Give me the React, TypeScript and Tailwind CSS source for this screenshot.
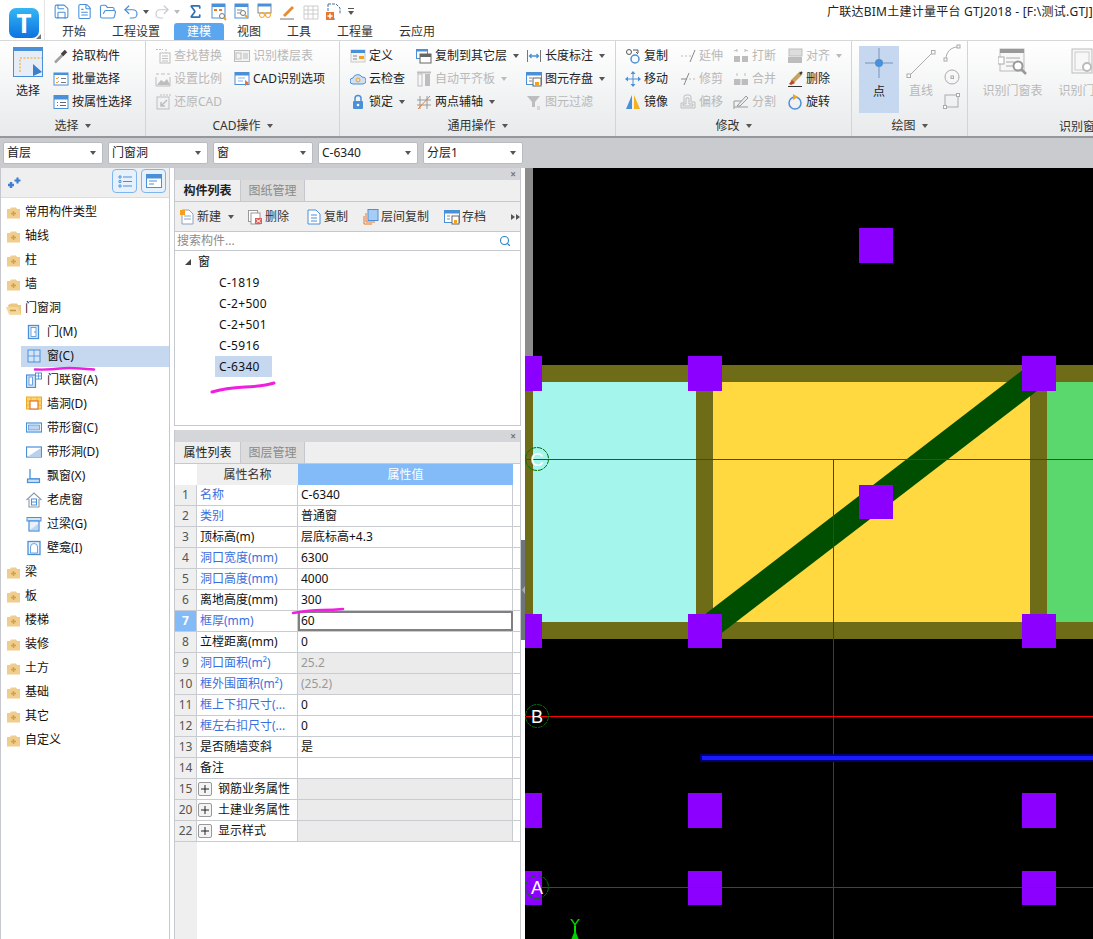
import React from "react";
import { Save, FileText, FolderOpen, Undo2, Redo2, Sigma, Search } from "lucide-react";

const B = "#4a90d9";
const G = "#bdbdbd";
const O = "#f5a11e";

function Ico({ children, w = 16, h = 16 }: { children?: React.ReactNode; w?: number; h?: number }) {
  return (
    <svg width={w} height={h} viewBox={`0 0 ${w} ${h}`} fill="none" className="shrink-0">
      {children}
    </svg>
  );
}

const Tri = ({ c = "#555" }: { c?: string }) => (
  <span className="ml-[6px] h-0 w-0 border-x-[3.5px] border-t-[4px] border-x-transparent" style={{ borderTopColor: c }} />
);

/* ---------- ribbon icons ---------- */
const pick = <Ico><path d="M2 14.5l8-8" stroke="#a0a0a0" strokeWidth="2.5" /><path d="M9 7l4-4" stroke="#444" strokeWidth="3.5" /></Ico>;
const batch = <Ico><rect x="1" y="2" width="14" height="12" stroke={B} fill="#fff" /><rect x="1" y="2" width="14" height="2" fill={B} /><path d="M3 7l1 1 2-2M3 11l1 1 2-2" stroke={O} /><path d="M8 7.5h5M8 11.5h5" stroke="#777" /></Ico>;
const attr = <Ico><rect x="1" y="1.5" width="14" height="13" stroke={B} fill="#fff" /><rect x="1" y="1.5" width="14" height="4" fill={B} /><path d="M4 8.5h1M7 8.5h6M4 11.5h1M7 11.5h6" stroke="#667" /></Ico>;
const findI = <Ico><path d="M1 1.5h7M11 1v4" stroke={G} strokeDasharray="2 1" /><rect x="5" y="5" width="10" height="10" stroke={G} /><path d="M7 8h6M7 10.500h6M7 13h6" stroke={G} /></Ico>;
const floorT = <Ico><rect x="0.500" y="2.500" width="15" height="11" stroke={G} fill="#f2f2f2" /><rect x="2" y="5" width="5" height="6" stroke={G} /><path d="M9 6h5M9 8h5M9 10h5" stroke={G} /></Ico>;
const scale = <Ico><path d="M1 3h3M6 3h4M12 3h3" stroke={G} /><path d="M1 6v9h14V6" stroke={G} /><path d="M2 14l4-5 3 2 3-3 3 6z" fill={G} /></Ico>;
const cadOpt = <Ico><rect x="1" y="1.500" width="14" height="12" stroke={B} fill="#fff" /><rect x="1" y="1.500" width="14" height="3" fill={B} /><path d="M4 7h7M4 10h5" stroke="#8ab4e8" /><path d="M11 9l4 3-4 3z" fill="#f07030" /></Ico>;
const restore = <Ico><rect x="2" y="3" width="12" height="12" stroke={G} /><path d="M5 1h11" stroke={G} strokeDasharray="2 1" /><path d="M12 6l-6 6M6 8v4h4" stroke={G} strokeWidth="1.500" /></Ico>;
const defI = <Ico><rect x="1" y="2" width="14" height="12" fill="#f4f4f4" stroke="#c9c9c9" /><rect x="1" y="2" width="14" height="3" fill={B} /><rect x="9" y="8" width="5" height="3" fill={O} /><path d="M3 8h4M3 11h4" stroke="#888" /></Ico>;
const cloud = <Ico><path d="M3 13a3 3 0 0 1 0-6 5 5 0 0 1 9-1 3.500 3.500 0 0 1 1 7z" fill="#cfe0f5" stroke={B} /><circle cx="8" cy="9" r="2" stroke={O} /></Ico>;
const lock = <Ico><path d="M5 7V4.500a3 3 0 0 1 6 0V7" stroke={B} strokeWidth="1.500" /><rect x="3" y="7" width="10" height="8" rx="1" fill={B} /><circle cx="8" cy="11" r="1.300" fill="#fff" /></Ico>;
const copyF = <Ico><rect x="0.500" y="1.500" width="11" height="9" fill="#fff" stroke={B} /><rect x="0.500" y="1.500" width="11" height="2" fill={B} /><rect x="4" y="6" width="11" height="9" fill="#fff" stroke="#666" /><rect x="4" y="6" width="11" height="3" fill="#666" /></Ico>;
const autoF = <Ico><path d="M1 1.500h14" stroke={G} strokeWidth="2" /><rect x="2" y="3" width="4" height="12" fill="none" stroke={G} /><rect x="9" y="3" width="5" height="12" fill={G} /></Ico>;
const twoP = <Ico><path d="M4 2v13M11 2v13M1 6h14M1 11h14" stroke="#999" /><path d="M2 15L14 2" stroke="#e87a30" /></Ico>;
const lenI = <Ico><path d="M1.500 2v12M14.500 2v12" stroke="#777" /><path d="M4 8h8M5.500 6L3.500 8l2 2M10.500 6l2 2-2 2" stroke={B} strokeWidth="1.300" /></Ico>;
const saveI = <Ico><rect x="0.500" y="1.500" width="15" height="12" fill="#fff" stroke={B} /><rect x="0.500" y="1.500" width="15" height="3" fill={B} /><rect x="7" y="7" width="8" height="8" fill="#fff" stroke="#666" /><rect x="9" y="11" width="4" height="4" fill={O} /><path d="M3 7h3M3 10h3" stroke="#888" /></Ico>;
const funnel = <Ico><path d="M1 2h13L9 8v5H6V8z" fill={G} /><path d="M11 13h3M11 15h3" stroke={G} /></Ico>;
const copy2 = <Ico><circle cx="4" cy="4" r="2.500" stroke="#555" /><circle cx="10" cy="11" r="4" stroke={B} strokeWidth="1.500" /><path d="M8 2h5v3M11 4l2 2" stroke="#555" /></Ico>;
const move = <Ico><path d="M8 2v12M2 8h12" stroke={B} /><path d="M8 0l2.500 3h-5zM8 16l2.500-3h-5zM0 8l3-2.500v5zM16 8l-3-2.500v5z" fill={B} /></Ico>;
const mirror = <Ico><path d="M7 1v14H1z" fill={B} /><path d="M9 1v14h6z" fill="#f5b21e" /></Ico>;
const ext = <Ico><path d="M1 8h2M5 8h2M9 8h2" stroke={G} /><path d="M10 14L15 2" stroke="#888" /></Ico>;
const trim = <Ico><path d="M1 8h6" stroke="#888" /><path d="M9 8h2M13 8h2" stroke={G} /><path d="M4 14L9 2" stroke="#888" /></Ico>;
const offs = <Ico><path d="M1 14V9h3V3a2 2 0 0 1 2-2h3a2 2 0 0 1 2 2v5h4v6z" stroke={G} /><path d="M3 12V10h3V4h3v6h4v2z" stroke={G} /></Ico>;
const brk = <Ico><path d="M4 1v3M12 1v3M1 3l3-1M15 3l-3-1" stroke={G} /><rect x="1" y="8" width="6" height="6" fill={G} /><rect x="9" y="8" width="6" height="6" fill={G} /></Ico>;
const mrg = <Ico><path d="M4 2v3M12 2v3" stroke={G} /><rect x="1" y="8" width="14" height="6" fill={G} /><path d="M8 8v6" stroke="#fff" /></Ico>;
const spl = <Ico><path d="M1 15V7h8M1 13h14" stroke="#999" /><path d="M4 12L13 2l2 2-8 8z" stroke="#999" fill="#eee" /></Ico>;
const align = <Ico w={16} h={16}><rect x="2" y="1" width="13" height="7" fill="#ddd" stroke={G} /><rect x="1" y="9" width="14" height="6" fill={G} /></Ico>;
const erase = <Ico><path d="M5 11L14 2" stroke="#c9a060" strokeWidth="4" /><path d="M15 1l-2 2" stroke="#333" strokeWidth="2" /><path d="M2 13l3-4 3 3-4 2z" fill="#c04a20" /><path d="M1 15.500h14" stroke="#333" /></Ico>;
const rot = <Ico><circle cx="8" cy="9" r="6" stroke={B} strokeWidth="1.500" /><path d="M6 0l5 3-5 3z" fill={O} /></Ico>;

const bigSel = (
  <Ico w={30} h={30}>
    <rect x="0.500" y="0.500" width="29" height="29" fill="#e6edf7" stroke={B} />
    <rect x="0" y="0" width="30" height="4" fill={B} />
    <path d="M7 25V11h22" stroke={O} strokeDasharray="2 1.500" />
    <path d="M20 17l9 8-9 4z" fill="#3d7fc9" />
  </Ico>
);
const pointI = (
  <Ico w={30} h={32}>
    <path d="M15 1v30M1 16h28" stroke="#7a93b3" />
    <circle cx="15" cy="16" r="4" fill={B} />
  </Ico>
);
const lineI = (
  <Ico w={30} h={30}>
    <path d="M3 27L27 3" stroke="#aaa" />
    <rect x="1" y="25" width="3.500" height="3.500" fill="#fff" stroke="#aaa" />
    <rect x="25.500" y="1.500" width="3.500" height="3.500" fill="#fff" stroke="#aaa" />
  </Ico>
);
const arcI = <Ico w={18} h={18}><path d="M3 15C3 8 8 3 15 3" stroke="#aaa" /><rect x="1" y="14" width="3" height="3" fill="#fff" stroke="#aaa" /><rect x="14" y="1" width="3" height="3" fill="#fff" stroke="#aaa" /></Ico>;
const circI = <Ico w={18} h={18}><circle cx="9" cy="9" r="7" stroke="#aaa" /><rect x="8" y="8" width="2.500" height="2.500" stroke="#aaa" /></Ico>;
const rectI = <Ico w={18} h={18}><rect x="2" y="3" width="13" height="12" stroke="#aaa" /><rect x="0.500" y="13.500" width="3" height="3" fill="#fff" stroke="#aaa" /><rect x="13.500" y="1.500" width="3" height="3" fill="#fff" stroke="#aaa" /></Ico>;
const winTable = (
  <Ico w={30} h={28}>
    <rect x="2" y="1" width="24" height="22" fill="#f7f7f7" stroke="#bbb" />
    <rect x="2" y="1" width="24" height="4" fill="#999" />
    <rect x="0" y="9" width="6" height="7" fill="#fff" stroke="#aaa" />
    <path d="M8 10h14M8 14h8M8 18h8" stroke="#aaa" />
    <circle cx="20" cy="18" r="4.500" fill="#fff" stroke="#999" strokeWidth="2" />
    <path d="M23 21l5 5" stroke="#999" strokeWidth="2.500" />
  </Ico>
);
const winTable2 = (
  <Ico w={24} h={28}>
    <rect x="1" y="1" width="20" height="24" fill="#f7f7f7" stroke="#bbb" />
    <rect x="4" y="4" width="14" height="18" stroke="#ccc" />
    <circle cx="16" cy="19" r="4" fill="#fff" stroke="#bbb" strokeWidth="2" />
  </Ico>
);

/* ---------- quick access icons ---------- */
const QDoc = (i: React.ReactNode) => (
  <Ico w={18} h={18}>
    <rect x="2" y="1" width="13" height="14" fill="#fff" stroke={B} />
    <rect x="2" y="1" width="13" height="3" fill={B} />
    {i}
  </Ico>
);
const qIcons = [
  QDoc(<><rect x="4" y="6" width="3" height="2" fill="#e57b33" /><rect x="9" y="6" width="3" height="2" fill="#e57b33" /><circle cx="12" cy="13" r="2.500" fill="#fff" stroke="#777" /><path d="M14 15l2 2" stroke={O} strokeWidth="2" /></>),
  QDoc(<><path d="M4 7h5M4 10h3" stroke="#888" /><circle cx="10" cy="10" r="2.500" fill="#fff" stroke="#777" /><path d="M12 12l3 3" stroke={O} strokeWidth="2" /></>),
  <Ico w={18} h={18}><rect x="2" y="1" width="13" height="9" fill="#fff" stroke="#888" /><rect x="2" y="1" width="13" height="2.500" fill={B} /><circle cx="6" cy="12" r="2.500" stroke={O} /><circle cx="12" cy="12" r="2.500" stroke={O} /><path d="M8.500 12h1" stroke={O} /></Ico>,
  <Ico w={18} h={18}><path d="M4 12L13 3l2 2-9 9z" fill="#e98a2c" /><path d="M1 16h14" stroke="#777" /></Ico>,
  <Ico w={18} h={18}><path d="M2 3h14v13H2zM2 7h14M2 11h14M6 3v13M11 3v13" stroke="#ccc" /></Ico>,
  <Ico w={18} h={18}><path d="M3 1h8l4 4v6M3 1v15h7" stroke="#4b6f9c" strokeDasharray="3 1" /><rect x="1" y="9" width="8" height="8" fill="#e8762c" /><path d="M5 10.500v5M2.500 13h5" stroke="#fff" strokeWidth="1.500" /></Ico>,
];

/* ---------- ribbon helpers ---------- */
function RI({ icon, label, off, arrow }: { icon: React.ReactNode; label: string; off?: boolean; arrow?: boolean }) {
  return (
    <div className="flex h-[23px] items-center whitespace-nowrap">
      <span className="mr-[3px] flex h-4 w-4 items-center justify-center">{icon}</span>
      <span className={off ? "text-[#b8b8b8]" : "text-[#222]"}>{label}</span>
      {arrow && <Tri c={off ? "#bbb" : "#555"} />}
    </div>
  );
}

function Group({ label, width, children, last }: { label: string; width: string; children: React.ReactNode; last?: boolean }) {
  return (
    <div className={`relative flex h-full flex-col ${width} ${last ? "" : "border-r border-[#d2d4d6]"}`}>
      <div className="flex h-[73px] items-start pt-[3px]">{children}</div>
      <div className="flex flex-1 items-center justify-center pt-[2px] text-[#333]">
        <span>{label}</span>
        {!last && <Tri />}
      </div>
    </div>
  );
}

function Big({ icon, label, off, w }: { icon: React.ReactNode; label: string; off?: boolean; w: string }) {
  return (
    <div className={`flex shrink-0 flex-col items-center ${w}`}>
      <div className="flex h-[36px] items-center">{icon}</div>
      <div className={`mt-[5px] whitespace-nowrap ${off ? "text-[#b8b8b8]" : "text-[#222]"}`}>{label}</div>
    </div>
  );
}

function Ribbon() {
  return (
    <div className="flex h-[97px] border-b-2 border-[#94979b] bg-gradient-to-b from-white to-[#e8eaeb] text-[12px]">
      <Group label="选择" width="w-[146px]">
        <div className="ml-[12px] w-[32px]"><Big w="w-[32px]" icon={bigSel} label="选择" /></div>
        <div className="ml-[9px]">
          <RI icon={pick} label="拾取构件" />
          <RI icon={batch} label="批量选择" />
          <RI icon={attr} label="按属性选择" />
        </div>
      </Group>
      <Group label="CAD操作" width="w-[194px]">
        <div className="ml-[9px] w-[79px]">
          <RI off icon={findI} label="查找替换" />
          <RI off icon={scale} label="设置比例" />
          <RI off icon={restore} label="还原CAD" />
        </div>
        <div>
          <RI off icon={floorT} label="识别楼层表" />
          <RI icon={cadOpt} label="CAD识别选项" />
        </div>
      </Group>
      <Group label="通用操作" width="w-[276px]">
        <div className="ml-[10px] w-[66px]">
          <RI icon={defI} label="定义" />
          <RI icon={cloud} label="云检查" />
          <RI icon={lock} label="锁定" arrow />
        </div>
        <div className="w-[110px]">
          <RI icon={copyF} label="复制到其它层" arrow />
          <RI off icon={autoF} label="自动平齐板" arrow />
          <RI icon={twoP} label="两点辅轴" arrow />
        </div>
        <div>
          <RI icon={lenI} label="长度标注" arrow />
          <RI icon={saveI} label="图元存盘" arrow />
          <RI off icon={funnel} label="图元过滤" />
        </div>
      </Group>
      <Group label="修改" width="w-[236px]">
        <div className="ml-[9px] w-[55px]">
          <RI icon={copy2} label="复制" />
          <RI icon={move} label="移动" />
          <RI icon={mirror} label="镜像" />
        </div>
        <div className="w-[53px]">
          <RI off icon={ext} label="延伸" />
          <RI off icon={trim} label="修剪" />
          <RI off icon={offs} label="偏移" />
        </div>
        <div className="w-[54px]">
          <RI off icon={brk} label="打断" />
          <RI off icon={mrg} label="合并" />
          <RI off icon={spl} label="分割" />
        </div>
        <div>
          <RI off icon={align} label="对齐" arrow />
          <RI icon={erase} label="删除" />
          <RI icon={rot} label="旋转" />
        </div>
      </Group>
      <Group label="绘图" width="w-[116px]">
        <div className="mt-[2px] ml-[7px] flex h-[67px] w-[40px] flex-col items-center bg-[#c6d8ef] pt-[1px]">
          {pointI}
          <div className="mt-[7px] text-[#222]">点</div>
        </div>
        <div className="mt-[2px] ml-[6px] w-[32px]">
          <div className="flex flex-col items-center">
            <div className="flex h-[36px] items-center">{lineI}</div>
            <div className="mt-[3px] whitespace-nowrap text-[#b8b8b8]">直线</div>
          </div>
        </div>
        <div className="ml-[6px] flex flex-col gap-[6px]">
          {arcI}
          {circI}
          {rectI}
        </div>
      </Group>
      <div className="relative flex h-full flex-1 flex-col overflow-hidden">
        <div className="flex h-[73px] items-start pt-[3px]">
          <div className="ml-[14px] w-[61px]"><Big w="w-[61px]" icon={winTable} label="识别门窗表" off /></div>
          <div className="ml-[9px] w-[61px] shrink-0"><Big w="w-[61px]" icon={winTable2} label="识别门窗" off /></div>
        </div>
        <div className="flex flex-1 items-center pt-[3px] pl-[91px] whitespace-nowrap text-[#333]">识别窗</div>
      </div>
    </div>
  );
}

function Sel({ w, text }: { w: string; text: string }) {
  return (
    <div className={`flex h-[22px] items-center justify-between rounded-[2px] border border-[#b8bbc0] bg-white pr-[6px] pl-[3px] text-[#222] ${w}`}>
      <span>{text}</span>
      <span className="h-0 w-0 border-x-[3.5px] border-t-[4px] border-x-transparent border-t-[#555]" />
    </div>
  );
}

/* ---------- sidebar ---------- */
const folderC = (
  <Ico w={15} h={13}>
    <path d="M1 3h3l1-1.500h5L11 3h3v9.500H1z" fill="#f0cd8c" />
    <path d="M7.500 5v5M5 7.500h5" stroke="#cfa24a" strokeWidth="1.500" />
  </Ico>
);
const folderO = (
  <Ico w={16} h={13}>
    <path d="M2 3l3-1.500h6l1 1.500h3v9.500H4z" fill="#edc77f" />
    <path d="M0 5h12l3 7.500H3z" fill="#f3d79d" />
    <path d="M4 8.500h6" stroke="#c99a3f" strokeWidth="1.500" />
  </Ico>
);
const subIcons: Record<string, React.ReactNode> = {
  "门(M)": <Ico><rect x="2.500" y="1.500" width="10" height="13" fill="#eaf1fa" stroke={B} strokeWidth="1.300" /><rect x="5" y="3.500" width="5" height="9" fill="#fff" stroke={B} strokeWidth=".8" /><circle cx="9" cy="8" r=".8" fill={B} /></Ico>,
  "窗(C)": <Ico><rect x="2" y="2" width="12" height="12" fill="#d5e5f8" stroke={B} strokeWidth="1" /><path d="M8 2v12M2 8h12" stroke={B} strokeWidth=".8" /></Ico>,
  "门联窗(A)": <Ico><rect x="0.500" y="3" width="9" height="12.500" fill="#d5e5f8" stroke={B} strokeWidth="1.200" /><rect x="3" y="5" width="3.500" height="8" fill="#fff" stroke={B} strokeWidth=".8" /><rect x="9.500" y="1" width="6" height="6" fill="#fff" stroke={B} strokeWidth="1" /><path d="M12.500 1v6M9.500 4h6" stroke={B} strokeWidth=".8" /></Ico>,
  "墙洞(D)": <Ico><rect x="0.500" y="1" width="15" height="12" fill="#fbd66f" stroke="#eba92b" /><path d="M0.500 5h15M0.500 9h15M5 1v4M11 1v4" stroke="#eba92b" strokeWidth=".7" /><rect x="4" y="5" width="8" height="8" fill="#fff" stroke="#e8762c" strokeWidth="1.200" /></Ico>,
  "带形窗(C)": <Ico><rect x="0.500" y="3" width="15" height="9" fill="#fff" stroke={B} strokeWidth="1.200" /><rect x="2.500" y="5" width="11" height="5" fill="#bcd5f2" stroke={B} strokeWidth=".7" /></Ico>,
  "带形洞(D)": <Ico><rect x="0.500" y="3" width="15" height="10" fill="#fff" stroke={B} strokeWidth="1.200" /><path d="M1 13L15 4v9z" fill="#b8d1ef" /></Ico>,
  "飘窗(X)": <Ico><path d="M4 1v10h10" stroke={B} strokeWidth="1.300" /><rect x="1.500" y="11" width="12" height="3.500" fill="#cfe0f5" stroke={B} strokeWidth="1.200" /></Ico>,
  "老虎窗": <Ico><path d="M0.500 8L8 1l7.500 7M3 7v8h10V7" stroke="#8c98a8" strokeWidth="1.100" /><rect x="5.500" y="7" width="5" height="6" stroke={B} /><path d="M5.500 10h5" stroke={B} /></Ico>,
  "过梁(G)": <Ico><rect x="1" y="1.500" width="14" height="3.500" fill="#d5e5f8" stroke={B} /><rect x="3" y="5" width="10" height="10" fill="#eaf1fa" stroke={B} strokeWidth="1.200" /><path d="M4 14l8-6v6z" fill="#bcd5f2" /></Ico>,
  "壁龛(I)": <Ico><rect x="2" y="1.500" width="12" height="13" fill="#eaf1fa" stroke={B} strokeWidth="1.300" /><path d="M4.500 13V7a3.500 3.500 0 0 1 7 0v6z" fill="#fff" stroke={B} strokeWidth=".8" /></Ico>,
};
const tree: [string, number][] = [
  ["常用构件类型", 0], ["轴线", 0], ["柱", 0], ["墙", 0], ["门窗洞", 1],
  ["门(M)", 2], ["窗(C)", 3], ["门联窗(A)", 2], ["墙洞(D)", 2], ["带形窗(C)", 2], ["带形洞(D)", 2],
  ["飘窗(X)", 2], ["老虎窗", 2], ["过梁(G)", 2], ["壁龛(I)", 2],
  ["梁", 0], ["板", 0], ["楼梯", 0], ["装修", 0], ["土方", 0], ["基础", 0], ["其它", 0], ["自定义", 0],
];

function Sidebar() {
  return (
    <div className="flex h-full w-[170px] shrink-0 flex-col border-x border-[#c5c8cc] bg-white">
      <div className="flex h-[30px] shrink-0 items-start justify-between border-b border-[#dcdcdc] bg-[#efefef] pt-[1px] pr-[3px] pl-[6px]">
        <div className="mt-[8px]">
          <Ico w={14} h={12}>
            <path d="M4 5v6M1 8h6" stroke="#3f7fd0" strokeWidth="2.500" />
            <path d="M10.500 0.500v6M7.500 3.500h6" stroke="#3f7fd0" strokeWidth="2.200" />
          </Ico>
        </div>
        <div className="flex gap-[4px]">
          <div className="flex h-[24px] w-[25px] items-center justify-center rounded-[4px] border border-[#7db6ef] bg-[#e6f1fc]">
            <Ico><path d="M2 3h2v2H2zM2 7.500h2v2H2zM2 12h2v2H2z" stroke={B} strokeWidth=".9" /><path d="M6 4h9M6 8.500h9M6 13h9" stroke={B} strokeWidth="1.200" /></Ico>
          </div>
          <div className="flex h-[24px] w-[25px] items-center justify-center rounded-[4px] border border-[#7db6ef] bg-[#e6f1fc]">
            <Ico w={18} h={16}><rect x="1.500" y="1.500" width="15" height="13" fill="#fff" stroke={B} /><rect x="1.500" y="1.500" width="15" height="4" fill={B} /><path d="M4 8h8M4 11h5" stroke={B} /></Ico>
          </div>
        </div>
      </div>
      <div className="pt-[2px]">
        {tree.map(([t, k]) =>
          k < 2 ? (
            <div key={t} className="flex h-[24px] items-center pl-[5px] text-[#111]">
              <span className="flex w-[19px]">{k === 1 ? folderO : folderC}</span>
              <span>{t}</span>
            </div>
          ) : (
            <div key={t} className="flex h-[24px] items-center justify-end">
              <div className={`flex h-[21px] w-[148px] items-center pl-[5px] text-[#111] ${k === 3 ? "bg-[#c6d8ef]" : ""}`}>
                <span className="mr-[5px] flex w-[16px]">{subIcons[t]}</span>
                <span>{t}</span>
              </div>
            </div>
          )
        )}
      </div>
    </div>
  );
}

/* ---------- middle panels ---------- */
function PanelHead({ a, b, bold }: { a: string; b: string; bold?: boolean }) {
  return (
    <>
      <div className="flex h-[12px] items-center justify-end bg-[#d4d6da] pr-[4px] text-[10px] leading-none text-[#777]">
        <span className="font-bold">×</span>
      </div>
      <div className="flex h-[22px] border-b border-[#c5c8cc] bg-[#efefef]">
        <div className={`flex w-[65px] items-center justify-center text-[#222] ${bold ? "font-bold" : ""}`}>{a}</div>
        <div className="flex w-[65px] items-center justify-center border-x border-[#c5c8cc] bg-[#dcdcdc] text-[#8a8a8a]">{b}</div>
      </div>
    </>
  );
}

function Tool({ w, icon, label, arrow }: { w: string; icon: React.ReactNode; label: string; arrow?: boolean }) {
  return (
    <div className={`flex shrink-0 items-center ${w}`}>
      <span className="mr-[2px] flex w-4">{icon}</span>
      <span className="text-[#333]">{label}</span>
      {arrow && <span className="ml-[1px] flex items-center"><Tri /></span>}
    </div>
  );
}

function ListPanel() {
  return (
    <div className="flex h-[258px] shrink-0 flex-col border-x border-b border-[#c5c8cc] bg-white">
      <PanelHead a="构件列表" b="图纸管理" bold />
      <div className="flex h-[30px] items-center border-b border-[#c5c8cc] bg-[#efefef] pl-[4px]">
        <Tool w="w-[68px]" label="新建" arrow icon={<Ico><path d="M3 1h7l4 4v10H3z" fill="#fff" stroke="#8aa3bf" /><path d="M5 7h7M5 10h7" stroke="#8aa3bf" /><rect x="1" y="1" width="5" height="5" fill={O} /></Ico>} />
        <Tool w="w-[59px]" label="删除" icon={<Ico><rect x="1.500" y="1.500" width="9" height="11" fill="#fff" stroke="#999" /><rect x="4" y="4" width="9" height="11" fill="#fff" stroke="#999" /><rect x="8" y="9" width="7" height="6" fill="#df5d5d" /><path d="M9.500 10.500l4 3M13.500 10.500l-4 3" stroke="#fff" /></Ico>} />
        <Tool w="w-[57px]" label="复制" icon={<Ico><path d="M2 1h8l4 4v10H2z" fill="#fff" stroke={B} /><path d="M5 6h6M5 9h6M5 12h6" stroke={B} /></Ico>} />
        <Tool w="w-[81px]" label="层间复制" icon={<Ico><rect x="5" y="0.500" width="10" height="11" fill="#a8cdf5" stroke={B} /><path d="M3 4v9h9M1 7v8h8" stroke="#e8762c" /></Ico>} />
        <Tool w="w-[60px]" label="存档" icon={<Ico><rect x="0.500" y="1.500" width="15" height="12" fill="#fff" stroke={B} /><rect x="0.500" y="1.500" width="15" height="3" fill={B} /><path d="M3 7h3M3 10h3" stroke="#888" /><rect x="8" y="7" width="7" height="8" fill="#fff" stroke="#666" /><rect x="10" y="11" width="3" height="4" fill={O} /></Ico>} />
        <div className="ml-[7px] flex gap-[1px]">
          <span className="h-0 w-0 border-y-[3px] border-l-[4px] border-y-transparent border-l-[#555]" />
          <span className="h-0 w-0 border-y-[3px] border-l-[4px] border-y-transparent border-l-[#555]" />
        </div>
      </div>
      <div className="flex h-[19px] items-center justify-between border-b border-[#c5c8cc] pr-[9px] pl-[2px] text-[#8c8c8c]">
        <span>搜索构件...</span>
        <Search size={12} color="#2a85c5" strokeWidth={2.2} />
      </div>
      <div className="flex-1 text-[#111]">
        <div className="flex h-[21px] items-center pl-[10px]">
          <span className="mr-[7px] h-0 w-0 border-b-[6px] border-l-[6px] border-b-[#444] border-l-transparent" />
          <span>窗</span>
        </div>
        {["C-1819", "C-2+500", "C-2+501", "C-5916", "C-6340"].map((c) => (
          <div key={c} className="flex h-[21px] items-center pl-[40px]">
            <span className={`flex h-[21px] w-[57px] items-center pl-[4px] tracking-[0.3px] ${c === "C-6340" ? "bg-[#c6d8ef]" : ""}`}>{c}</span>
          </div>
        ))}
      </div>
    </div>
  );
}

type Row = { n: number; name: string; val?: string; blue?: boolean; gray?: boolean; group?: boolean; active?: boolean };
const rows: Row[] = [
  { n: 1, name: "名称", val: "C-6340", blue: true },
  { n: 2, name: "类别", val: "普通窗", blue: true },
  { n: 3, name: "顶标高(m)", val: "层底标高+4.3" },
  { n: 4, name: "洞口宽度(mm)", val: "6300", blue: true },
  { n: 5, name: "洞口高度(mm)", val: "4000", blue: true },
  { n: 6, name: "离地高度(mm)", val: "300" },
  { n: 7, name: "框厚(mm)", val: "60", blue: true, active: true },
  { n: 8, name: "立樘距离(mm)", val: "0" },
  { n: 9, name: "洞口面积(m²)", val: "25.2", blue: true, gray: true },
  { n: 10, name: "框外围面积(m²)", val: "(25.2)", blue: true, gray: true },
  { n: 11, name: "框上下扣尺寸(...", val: "0", blue: true },
  { n: 12, name: "框左右扣尺寸(...", val: "0", blue: true },
  { n: 13, name: "是否随墙变斜", val: "是" },
  { n: 14, name: "备注" },
  { n: 15, name: "钢筋业务属性", group: true },
  { n: 20, name: "土建业务属性", group: true },
  { n: 22, name: "显示样式", group: true },
];

function PropPanel() {
  return (
    <div className="flex min-h-0 flex-1 flex-col border-x border-[#c5c8cc] bg-white">
      <PanelHead a="属性列表" b="图层管理" />
      <div className="flex h-[21px] shrink-0">
        <div className="w-[22px] bg-white" />
        <div className="flex w-[101px] items-center justify-center bg-[#efefef] text-[#333]">属性名称</div>
        <div className="flex w-[215px] items-center justify-center bg-[#82bbf7] text-white">属性值</div>
      </div>
      <div className="flex flex-1 flex-col">
        {rows.map((r) => (
          <div key={r.n} className="flex h-[21px] shrink-0 border-b border-[#c8ccd0]">
            <div className={`flex w-[22px] items-center justify-center border-r border-[#c8ccd0] ${r.active ? "bg-[#82bbf7] font-bold text-white" : "bg-[#efefef] text-[#555]"}`}>{r.n}</div>
            <div className="flex w-[101px] items-center overflow-hidden border-r border-[#c8ccd0] whitespace-nowrap">
              {r.group && (
                <span className="mr-[6px] ml-[1px] flex h-[14px] w-[14px] items-center justify-center rounded-[2px] border border-[#999] bg-[#f4f4f4]">
                  <Ico w={8} h={8}><path d="M4 0v8M0 4h8" stroke="#222" /></Ico>
                </span>
              )}
              <span className={`${r.group ? "" : "pl-[3px]"} ${r.blue ? "text-[#3a6fe0]" : "text-[#111]"}`}>{r.name}</span>
            </div>
            {r.active ? (
              <div className="flex w-[215px] items-center border-2 border-[#808080] pl-[1px] text-[#111]">{r.val}</div>
            ) : (
              <div className={`flex w-[215px] items-center border-r border-[#c8ccd0] pl-[3px] ${r.gray || r.group ? "bg-[#ebebeb]" : ""} ${r.gray ? "text-[#999]" : "text-[#111]"}`}>{r.val}</div>
            )}
          </div>
        ))}
        <div className="w-[22px] flex-1 bg-[#efefef]" />
      </div>
    </div>
  );
}

/* ---------- drawing ---------- */
function Pad({ x, y, w = 34, h = 35 }: { x: number; y: number; w?: number; h?: number }) {
  return <rect x={x} y={y} width={w} height={h} fill="#8b00ff" />;
}
function Axis({ y, t }: { y: number; t: string }) {
  return (
    <>
      <circle cx="537" cy={y} r="11.500" stroke="#007000" strokeDasharray="5 1" fill="none" />
      <text x="537" y={y + 6.500} textAnchor="middle" fontSize="18" fill="#fff" fontFamily="Liberation Sans, sans-serif">{t}</text>
    </>
  );
}
function Canvas() {
  return (
    <svg viewBox="525 168 568 771" width="568" height="771" className="block">
      <g shapeRendering="crispEdges">
        <rect x="525" y="168" width="568" height="771" fill="#000" />
        <rect x="525" y="168" width="8" height="197" fill="#8c8c8c" />
        <rect x="533" y="382" width="163" height="240" fill="#a4f5ec" />
        <rect x="713" y="382" width="317" height="240" fill="#ffd93f" />
        <rect x="1047" y="382" width="46" height="240" fill="#5bd86d" />
        <rect x="525" y="365" width="568" height="17" fill="#6f6c17" />
        <rect x="525" y="622" width="568" height="17" fill="#6f6c17" />
        <rect x="525" y="382" width="8" height="240" fill="#6f6c17" />
        <rect x="696" y="382" width="17" height="240" fill="#6f6c17" />
        <rect x="1030" y="382" width="17" height="240" fill="#6f6c17" />
      </g>
      <polygon points="706,613.500 1022,370.500 1037,391 722,632.800" fill="#004f00" />
      <g shapeRendering="crispEdges">
        <rect x="526" y="459" width="567" height="1" fill="#e00000" />
        <rect x="833" y="459" width="1" height="428" fill="#d00000" />
        <rect x="833" y="887" width="1" height="52" fill="#007000" />
        <rect x="526" y="716" width="567" height="1" fill="#ff0000" />
        <rect x="700" y="754" width="393" height="8" fill="#00006e" />
        <rect x="702" y="756" width="391" height="4" fill="#1a1aff" />
        <Pad x={859} y={228} />
        <Pad x={525} y={356} w={17} />
        <Pad x={688} y={356} />
        <Pad x={1022} y={356} />
        <Pad x={859} y={485} h={34} />
        <Pad x={525} y={614} w={17} h={34} />
        <Pad x={688} y={614} h={34} />
        <Pad x={1022} y={614} h={34} />
        <Pad x={525} y={793} w={17} />
        <Pad x={688} y={793} />
        <Pad x={1022} y={793} />
        <Pad x={525} y={871} w={17} h={34} />
        <Pad x={688} y={871} h={34} />
        <Pad x={1022} y={871} h={34} />
        <rect x="526" y="887" width="567" height="1" fill="#e00000" />
      </g>
      <Axis y={459} t="C" />
      <Axis y={716} t="B" />
      <Axis y={887} t="A" />
      <text x="575" y="929" textAnchor="middle" fontSize="15" fill="#00e000" fontFamily="Liberation Sans, sans-serif">Y</text>
      <rect x="574" y="926" width="2" height="6" fill="#00e000" />
      <polygon points="575,930 571,940 579,940" fill="#00d000" />
    </svg>
  );
}

export default function App() {
  return (
    <div className="relative h-[939px] w-[1093px] overflow-hidden bg-white text-[12px] leading-none [font-family:'Noto_Sans','Noto_Sans_CJK_SC',sans-serif]">
      {/* title + tabs */}
      <div className="flex h-[41px] border-b border-[#d6d8da]">
        <div className="relative flex w-[45px] shrink-0 items-start border-r border-[#e4e4e4] pt-[8px] pl-[9px]">
          <div className="flex h-[30px] w-[30px] items-center justify-center rounded-[7px] bg-gradient-to-b from-[#35b6f5] to-[#0f72e0] text-[26px] font-bold text-white">T</div>
          <span className="absolute right-[3px] bottom-[1px] h-0 w-0 border-b-[5px] border-l-[5px] border-b-[#777] border-l-transparent" />
        </div>
        <div className="min-w-0 flex-1">
          <div className="flex h-[23px] items-center pl-[5px]">
            {[
              <Save key="s" size={17} color={B} strokeWidth={1.5} />,
              <FileText key="f" size={17} color={B} strokeWidth={1.5} />,
              <FolderOpen key="o" size={18} color={B} strokeWidth={1.5} />,
              <Undo2 key="u" size={18} color={B} strokeWidth={1.6} />,
            ].map((ic, i) => (
              <span key={i} className="flex w-[23px] justify-center">{ic}</span>
            ))}
            <span className="flex w-[8px] justify-center"><span className="h-0 w-0 border-x-[3px] border-t-[4px] border-x-transparent border-t-[#555]" /></span>
            <span className="flex w-[23px] justify-center"><Redo2 size={18} color="#c6cbd2" strokeWidth={1.6} /></span>
            <span className="mr-[3px] flex w-[8px] justify-center"><span className="h-0 w-0 border-x-[3px] border-t-[4px] border-x-transparent border-t-[#bbb]" /></span>
            <span className="flex w-[23px] justify-center"><Sigma size={17} color="#2f6fb5" strokeWidth={2.4} /></span>
            {qIcons.map((ic, i) => (
              <span key={i} className="flex w-[23px] justify-center">{ic}</span>
            ))}
            <span className="ml-[3px] flex flex-col items-center gap-[2px]">
              <span className="h-px w-[6px] bg-[#555]" />
              <span className="h-0 w-0 border-x-[3px] border-t-[4px] border-x-transparent border-t-[#555]" />
            </span>
            <span className="ml-auto whitespace-nowrap tracking-[0.24px] text-[#222]">广联达BIM土建计量平台 GTJ2018 - [F:\测试.GTJ]</span>
          </div>
          <div className="flex h-[17px] items-stretch pl-[4px] text-[#333]">
            {["开始", "工程设置", "建模", "视图", "工具", "工程量", "云应用"].map((t) => (
              <div key={t} className={`flex items-center px-[13px] ${t === "建模" ? "rounded-t-[3px] bg-[#5aa7f0] text-white" : ""} ${t === "工程设置" ? "mr-[1px]" : ""}`}>{t}</div>
            ))}
          </div>
        </div>
      </div>

      <Ribbon />

      {/* selector row */}
      <div className="flex h-[30px] items-center gap-[5px] bg-[#c9cbcf] pb-[1px] pl-[3px]">
        <Sel w="w-[100px]" text="首层" />
        <Sel w="w-[100px]" text="门窗洞" />
        <Sel w="w-[100px]" text="窗" />
        <Sel w="w-[100px]" text="C-6340" />
        <Sel w="w-[100px]" text="分层1" />
      </div>

      {/* work area */}
      <div className="flex h-[771px]">
        <Sidebar />
        <div className="w-[4px] shrink-0 bg-white" />
        <div className="flex w-[347px] shrink-0 flex-col gap-[4px]">
          <ListPanel />
          <PropPanel />
        </div>
        <div className="flex w-[4px] shrink-0 flex-col bg-white">
          <div className="mt-[372px] flex h-[100px] items-center justify-center bg-[#6d747a]">
            <span className="h-0 w-0 border-y-[4px] border-r-[3px] border-y-transparent border-r-[#aab]" />
          </div>
        </div>
        <Canvas />
      </div>

      {/* marker strokes drawn over the screenshot */}
      <svg className="pointer-events-none absolute top-0 left-0" width="1093" height="939" fill="none">
        <path d="M35 369.500Q50 370 60 368.500T94 369.500" stroke="#f01fe0" strokeWidth="2.500" strokeLinecap="round" />
        <path d="M212 392Q225 388 245 387T274 383" stroke="#f01fe0" strokeWidth="3" strokeLinecap="round" />
        <path d="M293 613Q310 610 322 610T343 609" stroke="#f01fe0" strokeWidth="2.500" strokeLinecap="round" />
      </svg>
    </div>
  );
}
